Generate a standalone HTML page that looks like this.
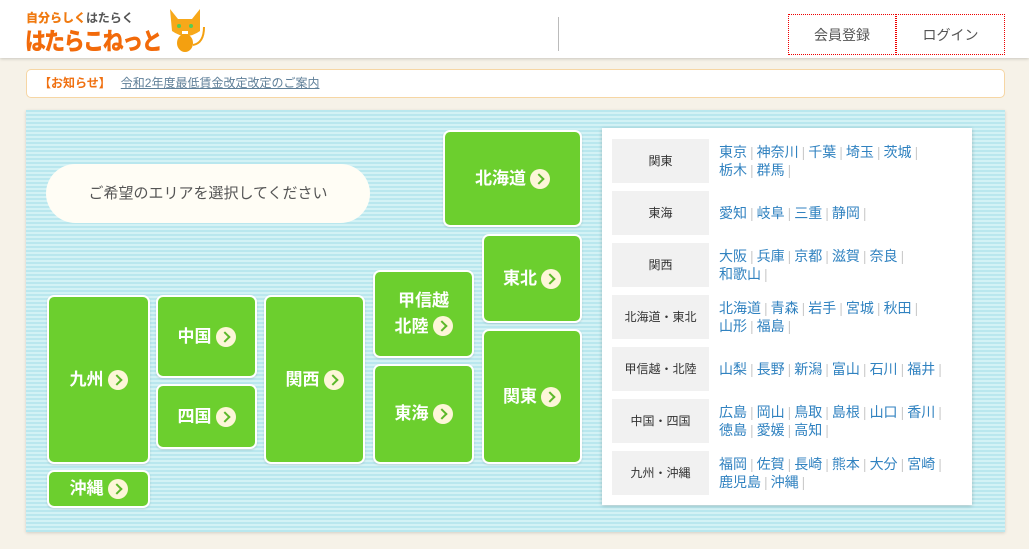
<!DOCTYPE html>
<html><head><meta charset="utf-8"><style>
*{margin:0;padding:0;box-sizing:border-box}
body{width:1029px;height:549px;overflow:hidden;background:#f6f2e8;font-family:"Liberation Sans","Noto Sans CJK JP",sans-serif;position:relative}
.hdr{position:absolute;left:0;top:0;width:1029px;height:58px;background:#fff;box-shadow:0 1px 3px rgba(0,0,0,.18)}
.sub{position:absolute;left:26px;top:9px;font-size:12px;color:#555;font-weight:bold}
.sub b{color:#f07a10}
.logo{position:absolute;left:25px;top:23px;font-size:21px;font-weight:900;color:#f26a0a;letter-spacing:-1.5px;transform:scaleY(1.15);transform-origin:top left}
.cat{position:absolute;left:166px;top:7px;width:40px;height:46px}
.btn{position:absolute;top:14px;height:41px;border:1px dotted #e00;font-size:14px;color:#555;display:flex;align-items:center;justify-content:center}
.notice{position:absolute;left:26px;top:69px;width:979px;height:29px;background:#fff;border:1px solid #f6d6a4;border-radius:5px;font-size:12px;line-height:27px;padding-left:12px}
.notice span{color:#f07010;font-weight:bold;margin-right:10px}
.notice a{color:#5f7f98;text-decoration:underline}
.main{position:absolute;left:26px;top:110px;width:979px;height:422px;background:repeating-linear-gradient(180deg,#b9e7ee 0 2px,#d3f2f5 2px 4px);box-shadow:0 1px 3px rgba(0,0,0,.15)}
.bub{position:absolute;left:46px;top:164px;width:324px;height:59px;background:#fffdf5;border-radius:30px;font-size:15px;color:#555;text-align:center;line-height:59px}
.b{position:absolute;background:#6ccf2e;border:2px solid #fff;border-radius:7px;color:#fff;font-weight:bold;font-size:17px;display:flex;align-items:center;justify-content:center;text-align:center;line-height:26px;box-shadow:0 1px 2px rgba(0,0,0,.12)}
.i{display:inline-block;width:20px;height:20px;border-radius:50%;background:#fdf6d8;vertical-align:-4px;margin-left:4px;position:relative}
.i:after{content:"";position:absolute;left:5px;top:6px;width:6px;height:6px;border-top:2px solid #5cb82a;border-right:2px solid #5cb82a;transform:rotate(45deg)}
.panel{position:absolute;left:602px;top:128px;width:370px;height:377px;background:#fff;box-shadow:0 1px 4px rgba(0,0,0,.2)}
.row{position:absolute;left:10px;width:350px;height:44px}
.lab{position:absolute;left:0;top:0;width:97px;height:44px;background:#f1f1f1;font-size:12px;color:#333;text-align:center;line-height:44px}
.lk{position:absolute;left:107px;top:0;width:240px;font-size:14px;line-height:18px;color:#3082c0}
.lk i{font-style:normal;color:#ccc;margin:0 3px}
</style></head><body>
<div class="hdr">
<div class="sub"><b>自分らしく</b>はたらく</div>
<div class="logo">はたらこねっと</div>
<svg class="cat" viewBox="0 0 40 46"><path d="M4 2 L12 12 L26 12 L34 2 L34 24 Q20 34 6 24Z" fill="#f7a81a"/><ellipse cx="19" cy="36" rx="8" ry="9" fill="#f4a010"/><circle cx="13" cy="19" r="2" fill="#5c5"/><circle cx="25" cy="19" r="2" fill="#5c5"/><rect x="16" y="24" width="6" height="3" fill="#fff"/><path d="M27 38 Q38 36 38 20" stroke="#f4a010" stroke-width="2" fill="none"/></svg>
<div style="position:absolute;left:558px;top:17px;width:1px;height:34px;background:#bbb"></div>
<div class="btn" style="left:788px;width:108px">会員登録</div>
<div class="btn" style="left:896px;width:109px">ログイン</div>
</div>
<div class="notice"><span>【お知らせ】</span><a>令和2年度最低賃金改定改定のご案内</a></div>
<div class="main"></div>
<div class="bub">ご希望のエリアを選択してください</div>
<div class="b" style="left:443px;top:130px;width:139px;height:97px">北海道<span class="i"></span></div>
<div class="b" style="left:482px;top:234px;width:100px;height:89px">東北<span class="i"></span></div>
<div class="b" style="left:482px;top:329px;width:100px;height:135px">関東<span class="i"></span></div>
<div class="b" style="left:373px;top:270px;width:101px;height:88px"><div>甲信越<br>北陸<span class="i"></span></div></div>
<div class="b" style="left:373px;top:364px;width:101px;height:100px">東海<span class="i"></span></div>
<div class="b" style="left:264px;top:295px;width:101px;height:169px">関西<span class="i"></span></div>
<div class="b" style="left:156px;top:295px;width:101px;height:83px">中国<span class="i"></span></div>
<div class="b" style="left:156px;top:384px;width:101px;height:65px">四国<span class="i"></span></div>
<div class="b" style="left:47px;top:295px;width:103px;height:169px">九州<span class="i"></span></div>
<div class="b" style="left:47px;top:470px;width:103px;height:38px">沖縄<span class="i"></span></div>
<div class="panel">
<div class="row" style="top:11px"><div class="lab">関東</div><div class="lk" style="top:4px">東京<i>|</i>神奈川<i>|</i>千葉<i>|</i>埼玉<i>|</i>茨城<i>|</i><br>栃木<i>|</i>群馬<i>|</i></div></div>
<div class="row" style="top:63px"><div class="lab">東海</div><div class="lk" style="top:13px">愛知<i>|</i>岐阜<i>|</i>三重<i>|</i>静岡<i>|</i></div></div>
<div class="row" style="top:115px"><div class="lab">関西</div><div class="lk" style="top:4px">大阪<i>|</i>兵庫<i>|</i>京都<i>|</i>滋賀<i>|</i>奈良<i>|</i><br>和歌山<i>|</i></div></div>
<div class="row" style="top:167px"><div class="lab">北海道・東北</div><div class="lk" style="top:4px">北海道<i>|</i>青森<i>|</i>岩手<i>|</i>宮城<i>|</i>秋田<i>|</i><br>山形<i>|</i>福島<i>|</i></div></div>
<div class="row" style="top:219px"><div class="lab">甲信越・北陸</div><div class="lk" style="top:13px">山梨<i>|</i>長野<i>|</i>新潟<i>|</i>富山<i>|</i>石川<i>|</i>福井<i>|</i></div></div>
<div class="row" style="top:271px"><div class="lab">中国・四国</div><div class="lk" style="top:4px">広島<i>|</i>岡山<i>|</i>鳥取<i>|</i>島根<i>|</i>山口<i>|</i>香川<i>|</i><br>徳島<i>|</i>愛媛<i>|</i>高知<i>|</i></div></div>
<div class="row" style="top:323px"><div class="lab">九州・沖縄</div><div class="lk" style="top:4px">福岡<i>|</i>佐賀<i>|</i>長崎<i>|</i>熊本<i>|</i>大分<i>|</i>宮崎<i>|</i><br>鹿児島<i>|</i>沖縄<i>|</i></div></div>
</div>
</body></html>
